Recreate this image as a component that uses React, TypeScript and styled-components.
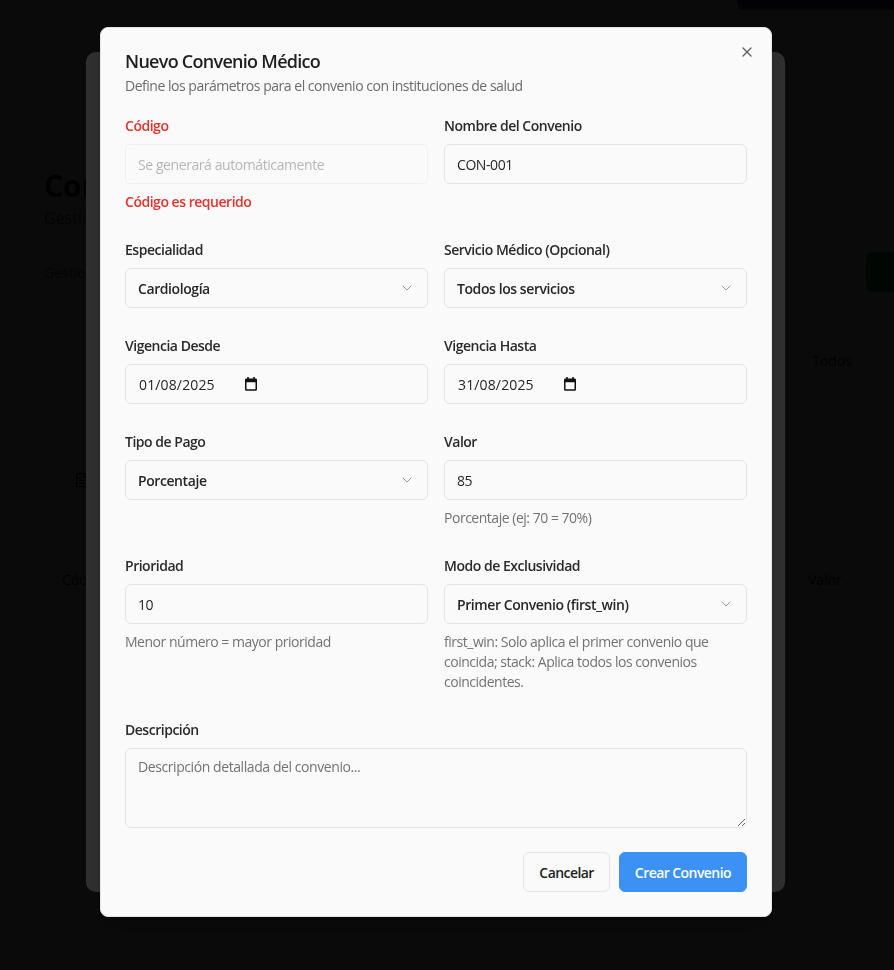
import React from "react";
import styled, { createGlobalStyle } from "styled-components";
import { X, ChevronDown, FileText } from "lucide-react";

const GlobalStyle = createGlobalStyle`
  html, body { margin: 0; padding: 0; overflow: hidden; }
  body {
    font-family: "Open Sans", "Noto Sans", sans-serif;
    background: #ffffff;
    color: #262626;
  }
  * { box-sizing: border-box; }
`;

/* ---------- page underneath (dimmed by two overlays) ---------- */
const Page = styled.div`
  min-height: 970px;
  padding: 0 0 0 44px;
  background: #ffffff;
  display: flex;
  flex-direction: column;
`;
const TopStrip = styled.div`
  align-self: flex-end;
  width: 157px;
  height: 10px;
  border-radius: 0 0 0 8px;
  background: #312e81;
`;
const Clip = styled.div`
  width: 42px;
  overflow: hidden;
  white-space: nowrap;
`;
const PageTitle = styled.h1`
  margin: 158px 0 0;
  font-size: 30px;
  line-height: 36px;
  font-weight: 700;
  color: #0a0a0a;
`;
const PageSub = styled.p`
  margin: 2px 0 0;
  font-size: 16px;
  line-height: 24px;
  color: #555;
`;
const Toolbar = styled.div`
  margin-top: 22px;
  display: flex;
  align-items: center;
  justify-content: space-between;
  margin-right: -40px;
`;
const ToolText = styled.span`
  font-size: 14px;
  color: #555;
`;
const GreenButton = styled.div`
  width: 68px;
  height: 40px;
  border-radius: 6px;
  background: #16a34a;
`;
const FilterRow = styled.div`
  margin-top: 59px;
  display: flex;
  justify-content: flex-end;
  padding-right: 42px;
  font-size: 14px;
  color: #111;
`;
const EmptyIcon = styled.div`
  margin: 101px 0 0 30px;
  color: #111;
`;
const TableHead = styled.div`
  margin-top: 77px;
  display: flex;
  justify-content: space-between;
  padding: 0 52px 14px 18px;
  font-size: 14px;
  color: #111;
  border-bottom: 1px solid #e5e5e5;
`;

/* ---------- overlays ---------- */
const Overlay = styled.div`
  position: fixed;
  inset: 0;
  background: rgba(0, 0, 0, 0.8);
`;
const BehindDialog = styled.div`
  position: fixed;
  left: 86px;
  top: 52px;
  width: 699px;
  height: 840px;
  border-radius: 10px;
  background: #ffffff;
`;

/* ---------- modal ---------- */
const Modal = styled.div`
  position: fixed;
  left: 100px;
  top: 27px;
  width: 672px;
  padding: 24px;
  background: #fafafa;
  border: 1px solid #e4e4e7;
  border-radius: 8px;
  box-shadow: 0 10px 30px rgba(0, 0, 0, 0.25);
  letter-spacing: -0.03em;
`;
const CloseButton = styled.button`
  position: absolute;
  top: 16px;
  right: 16px;
  width: 16px;
  height: 16px;
  padding: 0;
  border: 0;
  background: transparent;
  color: #3f3f46;
  opacity: 0.8;
  display: flex;
  align-items: center;
  justify-content: center;
  cursor: pointer;
`;
const Header = styled.div`
  display: flex;
  flex-direction: column;
  gap: 6px;
`;
const Title = styled.h2`
  margin: 0;
  font-size: 18px;
  line-height: 18px;
  font-weight: 600;
  letter-spacing: -0.04em;
  color: #1f1f1f;
`;
const Subtitle = styled.p`
  margin: 0;
  font-size: 14px;
  line-height: 20px;
  color: #6b6b6b;
`;
const Form = styled.div`
  margin-top: 20px;
  display: grid;
  grid-template-columns: 1fr 1fr;
  column-gap: 16px;
  row-gap: 28px;
`;
const Field = styled.div<{ $full?: boolean }>`
  display: flex;
  flex-direction: column;
  gap: 8px;
  grid-column: ${(p) => (p.$full ? "1 / -1" : "auto")};
`;
const Label = styled.label<{ $error?: boolean }>`
  font-size: 14px;
  line-height: 20px;
  font-weight: 600;
  color: ${(p) => (p.$error ? "#e5322d" : "#2a2a2a")};
`;
const ErrorText = styled.span`
  font-size: 14px;
  line-height: 20px;
  font-weight: 600;
  color: #e5322d;
`;
const Helper = styled.span`
  font-size: 14px;
  line-height: 20px;
  color: #737373;
`;
const Input = styled.input`
  height: 40px;
  width: 100%;
  padding: 0 12px;
  border: 1px solid #e5e5e5;
  border-radius: 6px;
  background: transparent;
  font-family: inherit;
  font-size: 14px;
  letter-spacing: -0.03em;
  color: #262626;
  outline: none;
  &::placeholder { color: #737373; }
  &:disabled { opacity: 0.5; cursor: not-allowed; }
`;
const SelectTrigger = styled.button`
  height: 40px;
  width: 100%;
  padding: 0 12px;
  border: 1px solid #e5e5e5;
  border-radius: 6px;
  background: transparent;
  display: flex;
  align-items: center;
  justify-content: space-between;
  font-family: inherit;
  font-size: 14px;
  font-weight: 600;
  letter-spacing: -0.03em;
  color: #262626;
  cursor: pointer;
  svg { opacity: 0.45; }
`;
const DateBox = styled.div`
  height: 40px;
  width: 100%;
  padding: 0 13px;
  border: 1px solid #e5e5e5;
  border-radius: 6px;
  display: flex;
  align-items: center;
  font-size: 14px;
  color: #262626;
  letter-spacing: 0;
`;
const DateText = styled.span`
  letter-spacing: 0.01em;
`;
const CalendarIcon = styled.svg`
  margin-left: 30px;
  flex: none;
`;
const TextArea = styled.textarea`
  height: 80px;
  width: 100%;
  padding: 8px 12px;
  border: 1px solid #e5e5e5;
  border-radius: 6px;
  background: transparent;
  font-family: inherit;
  font-size: 14px;
  line-height: 20px;
  letter-spacing: -0.03em;
  color: #262626;
  resize: vertical;
  outline: none;
  display: block;
  &::placeholder { color: #737373; }
`;
const Footer = styled.div`
  margin-top: 24px;
  display: flex;
  justify-content: flex-end;
  gap: 9px;
`;
const Button = styled.button<{ $primary?: boolean }>`
  height: 40px;
  padding: 0 15px;
  border-radius: 6px;
  border: 1px solid ${(p) => (p.$primary ? "#3b91f4" : "#e5e5e5")};
  background: ${(p) => (p.$primary ? "#3b91f4" : "#fafafa")};
  color: ${(p) => (p.$primary ? "#ffffff" : "#1f1f1f")};
  font-family: inherit;
  font-size: 14px;
  font-weight: 600;
  letter-spacing: -0.04em;
  cursor: pointer;
`;

const Calendar = () => (
  <CalendarIcon width="12" height="14" viewBox="0 0 12 14" aria-hidden>
    <rect x="2.2" y="0" width="1.6" height="2.5" fill="#111" />
    <rect x="8.2" y="0" width="1.6" height="2.5" fill="#111" />
    <rect x="0.75" y="2.25" width="10.5" height="10.75" rx="0.6" fill="none" stroke="#111" strokeWidth="1.5" />
    <rect x="0.75" y="2.25" width="10.5" height="3" fill="#111" />
  </CalendarIcon>
);

const Select = ({ value }: { value: string }) => (
  <SelectTrigger type="button">
    <span>{value}</span>
    <ChevronDown size={16} strokeWidth={1.5} />
  </SelectTrigger>
);

const DateField = ({ value }: { value: string }) => (
  <DateBox>
    <DateText>{value}</DateText>
    <Calendar />
  </DateBox>
);

export default function App() {
  return (
    <>
      <GlobalStyle />
      <Page aria-hidden>
        <TopStrip />
        <Clip>
          <PageTitle>Convenios Médicos</PageTitle>
          <PageSub>Gestiona los convenios con instituciones de salud</PageSub>
        </Clip>
        <Toolbar>
          <Clip>
            <ToolText>Gestiona y configura los convenios</ToolText>
          </Clip>
          <GreenButton />
        </Toolbar>
        <FilterRow>Todos</FilterRow>
        <EmptyIcon>
          <FileText size={16} />
        </EmptyIcon>
        <TableHead>
          <Clip>
            <span>Código</span>
          </Clip>
          <span>Valor</span>
        </TableHead>
      </Page>
      <Overlay />
      <BehindDialog />
      <Overlay />
      <Modal role="dialog">
        <CloseButton aria-label="Cerrar">
          <X size={16} strokeWidth={2} />
        </CloseButton>
        <Header>
          <Title>Nuevo Convenio Médico</Title>
          <Subtitle>Define los parámetros para el convenio con instituciones de salud</Subtitle>
        </Header>
        <Form>
          <Field>
            <Label $error>Código</Label>
            <Input disabled placeholder="Se generará automáticamente" />
            <ErrorText>Código es requerido</ErrorText>
          </Field>
          <Field>
            <Label>Nombre del Convenio</Label>
            <Input defaultValue="CON-001" />
          </Field>

          <Field>
            <Label>Especialidad</Label>
            <Select value="Cardiología" />
          </Field>
          <Field>
            <Label>Servicio Médico (Opcional)</Label>
            <Select value="Todos los servicios" />
          </Field>

          <Field>
            <Label>Vigencia Desde</Label>
            <DateField value="01/08/2025" />
          </Field>
          <Field>
            <Label>Vigencia Hasta</Label>
            <DateField value="31/08/2025" />
          </Field>

          <Field>
            <Label>Tipo de Pago</Label>
            <Select value="Porcentaje" />
          </Field>
          <Field>
            <Label>Valor</Label>
            <Input defaultValue="85" />
            <Helper>Porcentaje (ej: 70 = 70%)</Helper>
          </Field>

          <Field>
            <Label>Prioridad</Label>
            <Input defaultValue="10" />
            <Helper>Menor número = mayor prioridad</Helper>
          </Field>
          <Field>
            <Label>Modo de Exclusividad</Label>
            <Select value="Primer Convenio (first_win)" />
            <Helper>
              first_win: Solo aplica el primer convenio que coincida; stack: Aplica todos los convenios
              coincidentes.
            </Helper>
          </Field>

          <Field $full>
            <Label>Descripción</Label>
            <TextArea placeholder="Descripción detallada del convenio..." />
          </Field>
        </Form>
        <Footer>
          <Button type="button">Cancelar</Button>
          <Button type="button" $primary>
            Crear Convenio
          </Button>
        </Footer>
      </Modal>
    </>
  );
}
